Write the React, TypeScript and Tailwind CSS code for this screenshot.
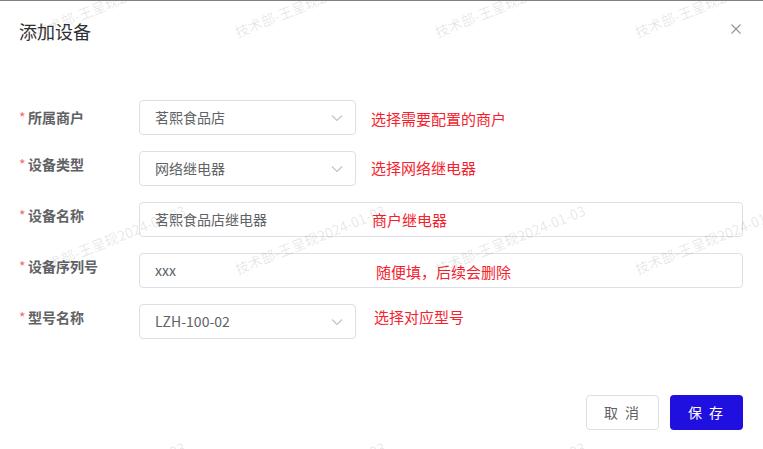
import React from "react";

const FONT = { fontFamily: '"Noto Sans CJK SC", "Noto Sans", sans-serif' };

function Chevron() {
  return (
    <svg width="12" height="8" viewBox="0 0 12 8" fill="none">
      <path d="M1 1.5 L6 6.5 L11 1.5" stroke="#c0c4cc" strokeWidth="1.2" />
    </svg>
  );
}

function Label({ text, lead }: { text: string; lead: string }) {
  return (
    <div className={`w-[120px] shrink-0 flex text-[14px] font-bold text-[#606266] ${lead}`}>
      <span className="w-[9px] text-[#f56c6c] font-normal">*</span>
      <span>{text}</span>
    </div>
  );
}

function Select({ value }: { value: string }) {
  return (
    <div className="w-[217px] h-[35px] shrink-0 flex items-center justify-between pl-[15px] pr-[12px] border border-[#dcdfe6] rounded-[4px] text-[14px] text-[#606266]">
      <span>{value}</span>
      <Chevron />
    </div>
  );
}

const HINT = "text-[15px] leading-[20px] text-[#f5222d] whitespace-nowrap";

function Watermarks() {
  const items: { x: number; y: number }[] = [];
  for (let r = 0; r < 3; r++) {
    for (let c = 0; c < 4; c++) {
      items.push({ x: 38 + c * 200, y: 38 + r * 237 });
    }
  }
  return (
    <div className="absolute inset-0 overflow-hidden pointer-events-none">
      {items.map((p, i) => (
        <span
          key={i}
          className="absolute origin-bottom-left -rotate-[22deg] whitespace-nowrap text-[14px] leading-[14px] text-[rgba(0,0,0,0.11)]"
          style={{ left: p.x, top: p.y - 14 }}
        >
          技术部-王呈现2024-01-03
        </span>
      ))}
    </div>
  );
}

export default function App() {
  return (
    <div
      className="relative w-[763px] h-[449px] bg-white border-t border-[#808080] overflow-hidden"
      style={FONT}
    >
      <div className="flex items-start justify-between pl-[19px] pr-[22px] pt-[18px]">
        <div className="text-[18px] leading-[24px] text-[#303133]">添加设备</div>
        <svg width="10" height="10" viewBox="0 0 10 10" className="mt-[5px]">
          <path d="M0.5 0.5 L9.5 9.5 M9.5 0.5 L0.5 9.5" stroke="#909399" strokeWidth="1.1" />
        </svg>
      </div>

      <div className="mt-[57px] pl-[19px] pr-[20px] flex flex-col gap-[16px]">
        <div className="flex items-start">
          <Label text="所属商户" lead="leading-[35px]" />
          <Select value="茗熙食品店" />
          <div className={`${HINT} ml-[15px] mt-[9px]`}>选择需要配置的商户</div>
        </div>

        <div className="flex items-start">
          <Label text="设备类型" lead="leading-[27px]" />
          <Select value="网络继电器" />
          <div className={`${HINT} ml-[15px] mt-[7px]`}>选择网络继电器</div>
        </div>

        <div className="flex items-start">
          <Label text="设备名称" lead="leading-[27px]" />
          <div className="relative flex-1 h-[35px] flex items-center px-[15px] border border-[#dcdfe6] rounded-[4px] text-[14px] text-[#606266]">
            <span>茗熙食品店继电器</span>
            <span className={`absolute left-[232px] top-[7px] ${HINT}`}>商户继电器</span>
          </div>
        </div>

        <div className="flex items-start">
          <Label text="设备序列号" lead="leading-[27px]" />
          <div className="relative flex-1 h-[35px] flex items-center px-[15px] border border-[#dcdfe6] rounded-[4px] text-[14px] text-[#606266]">
            <span>xxx</span>
            <span className={`absolute left-[236px] top-[8px] ${HINT}`}>随便填，后续会删除</span>
          </div>
        </div>

        <div className="flex items-start">
          <Label text="型号名称" lead="leading-[27px]" />
          <Select value="LZH-100-02" />
          <div className={`${HINT} ml-[18px] mt-[3px]`}>选择对应型号</div>
        </div>
      </div>

      <div className="mt-[56px] pr-[20px] flex justify-end gap-[11px]">
        <button className="w-[73px] h-[35px] border border-[#dcdfe6] rounded-[4px] bg-white text-[14px] text-[#606266] tracking-[2px]">
          取 消
        </button>
        <button className="w-[73px] h-[35px] rounded-[4px] bg-[#1f10e0] text-[14px] text-white tracking-[2px]">
          保 存
        </button>
      </div>

      <Watermarks />
    </div>
  );
}
